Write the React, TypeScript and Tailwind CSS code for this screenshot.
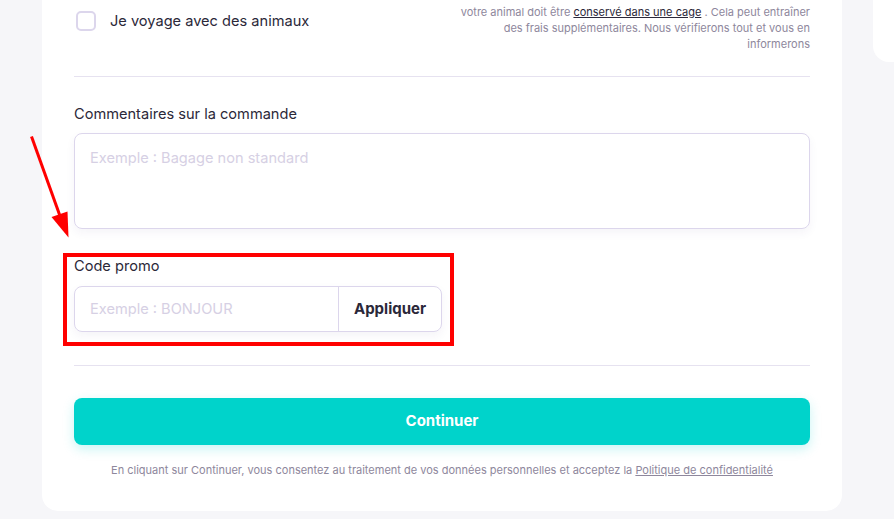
export default function App() {
  return (
    <div
      className="relative h-[519px] w-full overflow-hidden bg-[#f6f6f9] flex items-start"
      style={{ fontFamily: "Inter, 'Noto Sans', sans-serif" }}
    >
      {/* main form card, scrolled so its top is out of view */}
      <div className="ml-[42px] mt-[-12px] w-[800px] shrink-0 rounded-b-2xl bg-white px-8 pb-[33px]">
        <div className="flex items-start justify-between pt-4">
          <label className="mt-[7px] flex items-center gap-[14px] pl-[2px]">
            <span className="h-5 w-5 rounded-[5px] border-2 border-[#dcd6ec] bg-white" />
            <span className="text-[14.6px] leading-5 text-[#2b2839]">Je voyage avec des animaux</span>
          </label>
          <p className="w-[360px] text-right text-[11px] leading-4 text-[#8e879c]">
            votre animal doit être <a className="text-[#2b2839] underline">conservé dans une cage</a> . Cela
            peut entraîner des frais supplémentaires. Nous vérifierons tout et vous en informerons
          </p>
        </div>

        <div className="mt-6 h-px bg-[#e6e2f0]" />

        <div className="pt-[27px]">
          <div className="text-[14.6px] leading-5 text-[#2b2839]">Commentaires sur la commande</div>
          <textarea
            className="mt-[9px] block h-[96px] w-full resize-none rounded-lg border border-[#dcd6ec] px-[15px] pt-[14px] text-[14.6px] leading-5 text-[#2b2839] shadow-[0_4px_10px_rgba(60,40,120,0.05)] outline-none placeholder:text-[#d6d0e4]"
            placeholder="Exemple : Bagage non standard"
          />
        </div>

        <div className="pt-[27px]">
          <div className="text-[14.6px] leading-5 text-[#2b2839]">Code promo</div>
          <div className="mt-[10px] flex h-[46px] w-[368px] rounded-lg border border-[#dcd6ec] shadow-[0_4px_10px_rgba(60,40,120,0.05)]">
            <input
              className="h-full w-[263px] rounded-l-lg px-[15px] text-[14.6px] text-[#2b2839] outline-none placeholder:text-[#d6d0e4]"
              placeholder="Exemple : BONJOUR"
            />
            <button className="flex-1 border-l border-[#dcd6ec] text-[15px] font-bold text-[#2b2839]">
              Appliquer
            </button>
          </div>
        </div>

        <div className="mt-[33px] h-px bg-[#e6e2f0]" />

        <button className="mt-8 flex h-[47px] w-full items-center justify-center rounded-lg bg-[#00d3cb] text-[15px] font-bold text-white shadow-[0_4px_12px_rgba(0,211,203,0.22)]">
          Continuer
        </button>

        <p className="mt-[17px] text-center text-[11px] leading-4 text-[#8e879c]">
          En cliquant sur Continuer, vous consentez au traitement de vos données personnelles et acceptez la{" "}
          <a className="underline">Politique de confidentialité</a>
        </p>
      </div>

      {/* sidebar card, partly visible */}
      <div className="ml-[31px] mt-[-20px] h-[82px] flex-1 rounded-bl-2xl bg-white" />

      {/* annotation overlay */}
      <div className="absolute left-[63px] top-[253px] h-[93px] w-[391px] border-4 border-[#ff0000]" />
      <svg className="absolute left-0 top-0" width="120" height="260" viewBox="0 0 120 260">
        <line x1="31.5" y1="136.5" x2="60" y2="216" stroke="#ff0000" strokeWidth="3" />
        <polygon points="51.5,217 67.5,211.5 68.5,237.5" fill="#ff0000" />
      </svg>
    </div>
  );
}
